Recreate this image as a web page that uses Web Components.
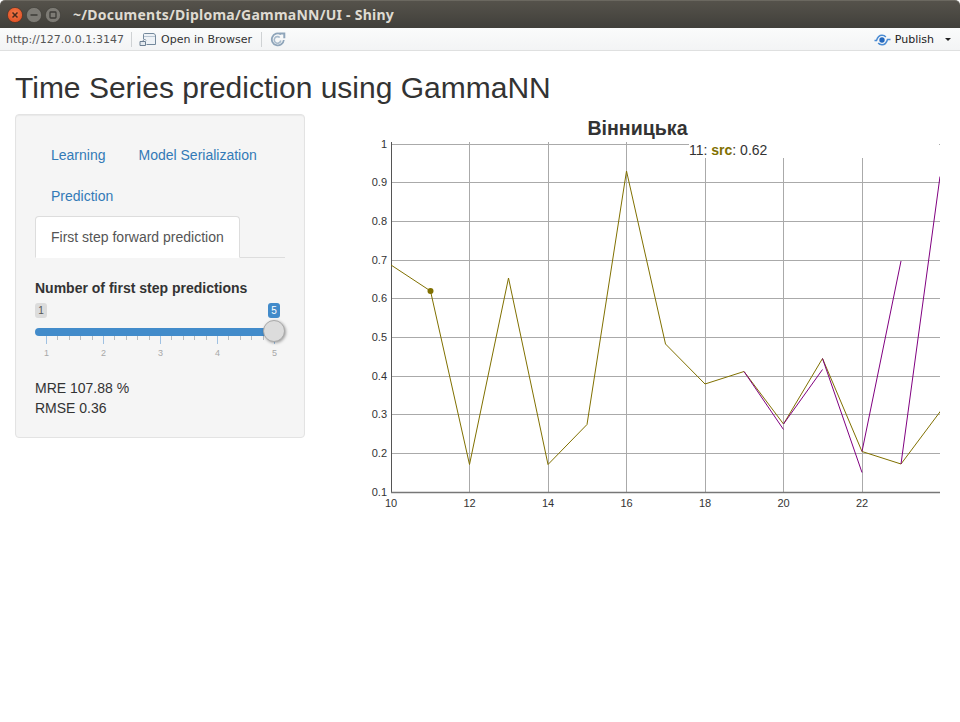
<!DOCTYPE html>
<html><head><meta charset="utf-8"><title>Shiny</title>
<style>
html,body{margin:0;padding:0;background:#fff}
body{font:14px/20px "Liberation Sans",Arial,sans-serif;color:#333;width:960px;height:722px;overflow:hidden}
</style></head>
<body>
<rs-titlebar title-text="~/Documents/Diploma/GammaNN/UI - Shiny"></rs-titlebar>
<rs-toolbar></rs-toolbar>
<rs-page heading="Time Series prediction using GammaNN">
  <rs-well slot="side">
    <rs-tabs></rs-tabs>
    <rs-slider label="Number of first step predictions"></rs-slider>
    <rs-metrics><div>MRE 107.88 %</div><div>RMSE 0.36</div></rs-metrics>
  </rs-well>
  <rs-chart slot="main"></rs-chart>
</rs-page>
<script>
function def(name, css, html){
  customElements.define(name, class extends HTMLElement{
    connectedCallback(){
      if(this.shadowRoot) return;
      const r=this.attachShadow({mode:'open'});
      r.innerHTML='<style>'+css+'</style>'+(typeof html==='function'?html(this):html);
    }
  });
}
def('rs-titlebar',`
:host{display:flex;align-items:center;height:28px;box-sizing:border-box;background:linear-gradient(#55524b 0,#4a4842 55%,#403f3a 100%);border-top:1px solid #6b6860;border-radius:5px 5px 0 0;color:#dfdbd2;font:700 14px "Noto Sans","Open Sans",sans-serif}
.btns{display:flex;gap:3px;margin-left:7px;width:66px;flex:none}
.b{width:16px;height:16px;border-radius:50%;display:block}
span{white-space:nowrap;letter-spacing:.24px}
`,h=>`<div class="btns">
<svg class="b" viewBox="0 0 16 16"><defs><radialGradient id="r" cx=".5" cy=".4" r=".7"><stop offset="0" stop-color="#f47a48"/><stop offset="1" stop-color="#dc4a20"/></radialGradient></defs><circle cx="8" cy="8" r="7.6" fill="url(#r)" stroke="#3a2a22" stroke-width=".6"/><path d="M5.500 5.500l5 5M10.500 5.500l-5 5" stroke="#4a2a1c" stroke-width="1.500"/></svg>
<svg class="b" viewBox="0 0 16 16"><circle cx="8" cy="8" r="7.6" fill="#7d7b75" stroke="#3a3934" stroke-width=".6"/><path d="M4.500 8h7" stroke="#3c3b37" stroke-width="1.600"/></svg>
<svg class="b" viewBox="0 0 16 16"><circle cx="8" cy="8" r="7.6" fill="#7d7b75" stroke="#3a3934" stroke-width=".6"/><rect x="5" y="5" width="6" height="6" rx=".8" fill="none" stroke="#3c3b37" stroke-width="1.300"/></svg>
</div><span>${h.getAttribute('title-text')}</span>`);

def('rs-toolbar',`
:host{display:flex;align-items:center;height:23px;box-sizing:border-box;background:linear-gradient(#fafbfb,#f3f4f5);border-bottom:1px solid #dfe0e0;font:11px "DejaVu Sans",sans-serif;color:#333;padding:1px 0 0 6px}
.url{color:#555;width:117px;white-space:nowrap}
.sep{width:1px;height:15px;background:#cfd2d4;flex:none}
.open{display:flex;align-items:center;margin-left:7px;gap:4px;white-space:nowrap;width:122px}
.refresh{margin-left:8px;flex:none}
.sp{flex:1}
.pub{display:flex;align-items:center;gap:3px;margin-right:25px;white-space:nowrap;color:#222}
.caret{width:0;height:0;border:3px solid transparent;border-top:3.5px solid #222;border-bottom:0;margin-right:9px;margin-left:-14px;flex:none}
`,`<span class="url">http://127.0.0.1:3147</span><span class="sep" style="margin-left:8px"></span>
<span class="open"><svg width="18" height="15" viewBox="0 0 18 15" fill="none"><path d="M4.500 7V2.500C4.500 1.800 5 1.500 5.500 1.500H14c1.500 0 2.500 1 2.500 2.500V12.500H7.500" fill="#eef2f6" stroke="#74899c"/><path d="M5 4.500h11" stroke="#b9c6d2"/><path d="M1 13.500v-4h5.500v4z" fill="#e4e9ee" stroke="#6d8093"/><path d="M3 10l2.500-3 1.500 1.500" stroke="#6d8093"/></svg><span>Open in Browser</span></span>
<span class="sep"></span>
<svg class="refresh" width="16" height="15" viewBox="0 0 16 15" fill="none"><path d="M11 2.300A6 6 0 1 0 13.800 8" stroke="#8fa5ba" stroke-width="1.800"/><path d="M9.800 5.500A3.300 3.300 0 1 0 10.800 8.500" stroke="#a9bbcc" stroke-width="1.600"/><path d="M9.500 .6h5.800v5.600h-2v-3.600h-3.800z" fill="#8fa5ba"/></svg>
<span class="sp"></span>
<span class="pub"><svg width="18" height="12" viewBox="0 0 18 12" fill="none"><circle cx="8" cy="6" r="2.700" fill="#2468bd"/><path d="M.5 6.500H2.500C3.500 3 5.500 1.200 8 1.200c1.800 0 3 .7 3.800 1.800" stroke="#4a8bd3" stroke-width="1.500"/><path d="M16.500 5.500H13.500C12.500 9 10.500 10.800 8 10.800c-1.800 0-3-.7-3.800-1.800" stroke="#4a8bd3" stroke-width="1.500"/></svg><span>Publish</span></span>
<span class="caret"></span>`);

def('rs-page',`
:host{display:block;padding:0 15px}
h2{font:500 30px/33px "Liberation Sans",Arial,sans-serif;margin:20px 0 10px;color:#333}
.row{display:grid;grid-template-columns:290px 610px;column-gap:30px;align-items:start}
`,h=>`<h2>${h.getAttribute('heading')}</h2><div class="row"><slot name="side"></slot><slot name="main"></slot></div>`);

def('rs-well',`
:host{display:block;box-sizing:border-box;background:#f5f5f5;border:1px solid #e3e3e3;border-radius:4px;padding:19px;box-shadow:inset 0 1px 1px rgba(0,0,0,.05)}
`,`<slot></slot>`);

def('rs-tabs',`
:host{display:flex;flex-wrap:wrap;border-bottom:1px solid #ddd;margin-bottom:20px}
a{display:block;padding:10px 15px;border:1px solid transparent;border-radius:4px 4px 0 0;margin:0 2px -1px 0;color:#337ab7;line-height:20px;white-space:nowrap}
a.first{margin-right:1px}
a.on{color:#555;background:#fff;border-color:#ddd #ddd transparent}
`,`<a class="first">Learning</a><a>Model Serialization</a><a>Prediction</a><a class="on">First step forward prediction</a>`);

function ticks(){
  let s='';
  for(let i=0;i<=20;i++){
    const maj=i%5==0, X=Math.floor(11.5+i*11.4)+.5;
    s+=`<path d="M${X} 0v${maj?8:4}" stroke="${maj?'#9fc1e2':'#b8bcc0'}"/>`;
    if(maj) s+=`<text x="${X}" y="19.500" text-anchor="middle">${i/5+1}</text>`;
  }
  return s;
}
def('rs-slider',`
:host{display:block;margin-bottom:20px}
label{display:block;font-weight:700;line-height:20px;margin-bottom:5px;color:#333}
.vals{display:flex;justify-content:space-between;font-size:10px;line-height:15px;height:15px;padding-right:5px}
.vals span{padding:0 3px;border-radius:3px;min-width:6px;text-align:center}
.min{background:#dcdcdc;color:#555}
.val{background:#428bca;color:#fff}
.track{position:relative;height:8px;margin-top:10px;width:240px;background:#428bca;border-radius:5px 0 0 5px}
.thumb{position:absolute;right:-10px;top:-8px;width:22px;height:22px;box-sizing:border-box;border-radius:50%;background:#dcdcdc;border:1px solid #aaa;box-shadow:1px 1px 3px rgba(0,0,0,.35)}
svg{display:block;font:9px "Liberation Sans",Arial,sans-serif;fill:#a8a8a8}
`,h=>`<label>${h.getAttribute('label')}</label><div class="vals"><span class="min">1</span><span class="val">5</span></div>
<div class="track"><div class="thumb"></div></div><svg width="250" height="22" viewBox="0 0 250 22">${ticks()}</svg>`);

def('rs-metrics',`:host{display:block;line-height:20px;color:#333}`,`<slot></slot>`);

const grid=()=>{
  let s='';
  for(const y of [144,182,221,260,298,337,376,414,453]) s+=`<path d="M391 ${y+.5}H940" stroke="#aaa"/>`;
  for(const x of [469,548,626,705,783,862]) s+=`<path d="M${x+.5} 142V492" stroke="#aaa"/>`;
  return s;
};
const labels=()=>{
  let s='';
  const ys=[[1,148],[.9,186],[.8,225],[.7,264],[.6,302],[.5,341],[.4,380],[.3,418],[.2,457],[.1,496]];
  for(const [v,y] of ys) s+=`<text x="387" y="${y}" text-anchor="end">${v}</text>`;
  const xs=[[10,391],[12,469.5],[14,548],[16,626.5],[18,705],[20,783.5],[22,862]];
  for(const [v,x] of xs) s+=`<text x="${x}" y="507" text-anchor="middle">${v}</text>`;
  return s;
};
const olive='391,265 430.500,291 469.500,464.500 508.500,278 548,464.500 587,424.500 626.500,171 665.500,344 705,384 744,371.500 783.500,424 822.500,358.500 862,451.500 901,464 941,410.500';
const purple=[[744,371.500,783.500,429.500],[783.500,424,822.500,369.500],[822.500,358.500,862,472.500],[862,451.500,901,261],[901,464,940,176.500]];
def('rs-chart',`
:host{display:block;position:relative;width:610px;height:406px}
svg{display:block;font:11px "Liberation Sans",Arial,sans-serif;fill:#333}
.t{font:700 19.6px "Liberation Sans",Arial,sans-serif;fill:#333}
.legend{position:absolute;left:354px;top:28px;width:250px;height:16px;background:#fff;font-size:14px;line-height:16px;color:#333}
b{color:#807000}
`,`<svg width="610" height="406" viewBox="335 114 610 406">
<text class="t" x="637.500" y="135" text-anchor="middle">Вінницька</text>
${grid()}
<path d="M391.500 142V492.500" stroke="#555"/>
<path d="M391 492.500H940" stroke="#777" stroke-width="1.500"/>
<clipPath id="c"><rect x="391" y="142" width="549" height="351"/></clipPath>
<g clip-path="url(#c)" fill="none">
<polyline points="${olive}" stroke="#807000"/>
${purple.map(p=>`<path d="M${p[0]} ${p[1]}L${p[2]} ${p[3]}" stroke="#800080"/>`).join('')}
</g>
<circle cx="430.500" cy="291" r="3" fill="#807000"/>
${labels()}
</svg><div class="legend">11: <b>src</b>: 0.62</div>`);
</script>
</body></html>
